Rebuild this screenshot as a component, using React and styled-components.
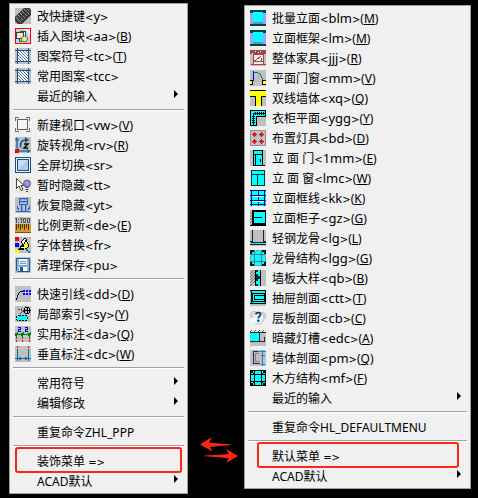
import React from "react";
import styled, { createGlobalStyle } from "styled-components";

const GlobalStyle = createGlobalStyle`
  * {
    box-sizing: border-box;
  }
  body {
    margin: 0;
    background-color: #000;
    font-family: "Noto Sans", "Noto Sans CJK SC", sans-serif;
    font-size: 12px;
    line-height: 20px;
    color: #000;
  }
`;

const Page = styled.main`
  display: flex;
  align-items: flex-start;
  padding: 3px 7px 3px 9px;
`;
const Column = styled.div`
  flex: ${(props) => props.$grow} 1 0;
  min-width: 0;
  padding-top: ${(props) => (props.$lower ? "2px" : "0px")};
`;
const MenuBox = styled.div`
  display: flex;
  flex-direction: column;
  padding: 2px;
  background-color: #f0f0f0;
  border: 1px solid #a0a0a0;
`;
const Item = styled.button`
  position: relative;
  display: flex;
  align-items: center;
  gap: 6px;
  width: 100%;
  height: 20px;
  padding: 0 7px 0 3px;
  border: none;
  background: none;
  color: inherit;
  font: inherit;
  text-align: left;
  white-space: pre;
  cursor: pointer;
`;
const IconSlot = styled.span`
  display: flex;
  flex: none;
  width: 16px;
  height: 16px;
`;
const Label = styled.span`
  flex: 1;
  height: 20px;
  line-height: 22px;
`;
const Code = styled.span`
  font-size: 13px;
  line-height: 1;
`;
const Bracket = styled.span`
  font-family: "DejaVu Sans", sans-serif;
  font-size: 10px;
  line-height: 1;
`;
const Separator = styled.hr`
  height: 2px;
  width: auto;
  margin: 3px 1px 4px;
  border: none;
  border-top: 1px solid #a0a0a0;
  background-color: #fff;
`;
const Frame = styled.span`
  position: absolute;
  top: -4px;
  bottom: -2px;
  left: ${(props) => (props.$narrow ? "10px" : "3px")};
  right: ${(props) => (props.$narrow ? "9px" : "3px")};
  border: 2px solid #ff2414;
  border-radius: 3px;
  pointer-events: none;
`;
const Arrow = styled.svg`
  flex: none;
  margin-bottom: 4px;
`;
const Swap = styled.div`
  display: flex;
  flex: 56 1 0;
  justify-content: center;
  align-self: flex-end;
  padding-bottom: 31px;
`;

const GRAY = "#c0c0c0";
const CYAN = "#00ffff";
const BLUE = "#0868b0";

const Svg = ({ bg, smooth, children }) => (
  <svg
    width="16"
    height="16"
    viewBox="0 0 16 16"
    fill="none"
    shapeRendering={smooth ? "auto" : "crispEdges"}
    aria-hidden="true"
  >
    {bg ? <rect width="16" height="16" fill={bg} /> : null}
    {children}
  </svg>
);

const hatchIcon = (
  <Svg bg={GRAY} smooth>
    <path d="M0 9L9 0h5l2 2v5l-9 9H3l-3-3z" fill="#383838" />
    <path d="M1 9l5 5M3 7l5 5M5 5l5 5M7 3l5 5M9 1l5 5" stroke="#d8d8d8" strokeDasharray="1 1" />
    <path d="M12 1l3 3M2 11l3 3" stroke="#b0b0b0" strokeDasharray="1 1" />
  </Svg>
);
const insertBlock = (
  <Svg bg="#c9d3dc" smooth>
    <path d="M9 1h6v6z" fill="#eef2f5" />
    <rect x="5.500" y="3.500" width="5" height="5" fill="#fff" stroke="#17457c" />
    <rect x="1.500" y="4.500" width="7" height="6" fill="#fff3a0" stroke="#17457c" />
    <path d="M4.500 11v2.500H7" stroke="#17457c" />
    <circle cx="9.500" cy="11" r="3" fill="#f7e98a" stroke="#4a6a6a" />
    <rect x=".5" y=".5" width="15" height="15" stroke="#ff0000" />
  </Svg>
);
const patternIcon = (
  <Svg bg={GRAY} smooth>
    <rect x="3" y="3" width="10" height="10" fill="#fff" />
    <path d="M3 10l3 3M3 7l6 6M3 4l9 9M5 3l8 8M8 3l5 5M11 3l2 2" stroke="#3c6c9c" strokeWidth=".9" />
    <path d="M0 2.500h16M0 13.500h16M2.500 0v16M13.500 0v16" stroke="#1c4f88" />
  </Svg>
);
const viewport = (
  <Svg>
    <rect x="2.500" y="2.500" width="10" height="10" fill="#f6f6f6" stroke="#606060" />
    <path d="M.5 4V.5H4M11 .5h3.500V4M.5 11v3.500H4M11 14.500h3.500V11" stroke="#707070" />
  </Svg>
);
const rotateView = (
  <Svg bg={GRAY} smooth>
    <path d="M2 1v12M4 14h11" stroke="#1674b8" strokeWidth="1.500" />
    <path d="M2 0l2.500 3.500h-5zM16 14l-4-2v4z" fill="#1674b8" />
    <path d="M5.500 10.500C5 5 7 3 11 3" stroke="#174a80" strokeWidth="1.500" />
    <path d="M10 0l4 3-4 3z" fill="#174a80" />
    <path d="M9 7h4l-4 4h4" stroke="#000" strokeWidth="1.400" />
    <path d="M0 12h4v4H0z" fill="#ff0000" />
    <path d="M0 15h1v1H0zM3 12h1v1H3z" fill="#600" />
  </Svg>
);
const fullScreen = (
  <Svg bg="#1c4f80">
    <rect x="1" y="1" width="14" height="14" fill="#eef6fc" />
    <rect x="2" y="2" width="12" height="12" fill="#1c4f80" />
    <rect x="3" y="3" width="10" height="10" fill="#a9cdec" />
    <path d="M3 3h9L3 12z" fill="#c4def4" />
  </Svg>
);
const hideIcon = (
  <Svg bg="#ece9d8" smooth>
    <path d="M1.500 1.500v10L4 9l2 4.500 2-1L6 8.500h3z" fill="#fff" stroke="#404040" />
    <circle cx="12" cy="6.500" r="3.500" fill="#8c8cd8" stroke="#5c5ca8" />
    <path d="M11 5l2 3" stroke="#c8c8ff" />
    <path d="M10.500 10.500h3M10.500 12.500h3M11 14.500h2" stroke="#404060" />
  </Svg>
);
const showIcon = (
  <Svg bg={GRAY}>
    <path d="M4.500 1.500h8v6h-8zM4.500 4.500h8" stroke="#2060d0" />
    <path d="M6.500 8v6M10.500 8v6M2.500 9v2h1v2M14.500 9v2h-1v2M1 14.500h14" stroke="#2060d0" />
    <path d="M7.500 8v6M11.500 8v6M5 2.500h7M5 5.500h7" stroke="#86a6dc" />
  </Svg>
);
const scaleIcon = (
  <Svg bg={GRAY} smooth>
    <rect y="7" width="16" height="8" fill="#d39a2c" />
    <path d="M0 15.500h16" stroke="#805010" />
    <path d="M1.500 7v6M3.500 7v4M5.500 7v6M7.500 7v4M9.500 7v6M11.500 7v4M13.500 7v6" stroke="#4c3000" />
    <path d="M0 2l1.500-1v5M3.500 2v1M3.500 5v1M5 2l1.500-1v5M8.500 1.500h2v4h-2zM12.500 1.500h2v4h-2z" stroke="#505050" />
  </Svg>
);
const fontSwap = (
  <Svg bg={GRAY}>
    <path d="M0 0h4v4H0z" fill="#ff0000" />
    <path d="M0 6h4v4H0z" fill="#0000ff" />
    <path d="M0 12h4v4H0z" fill="#ffff00" />
    <path d="M4 13l5-7" stroke="#000" strokeWidth="2" />
    <path d="M6 5l4-4 2 2-3 5z" fill="#f4f4f4" stroke="#000" />
    <path d="M4 11h5v2H4z" fill="#000" />
    <path d="M11 3l3 6-3 3-3-3z" fill="#ffff00" stroke="#000" />
    <path d="M6 10h5" stroke="#fff" />
    <path d="M11 12h2v2h2v2h-2v-2h-2z" fill="#008080" />
  </Svg>
);
const saveIcon = (
  <Svg bg={GRAY} smooth>
    <path d="M1.500 1.500h13v13h-12l-1-1z" fill="#8cb8e0" stroke="#1c5a94" />
    <path d="M4 2h8v6H4z" fill="#f4f8fc" />
    <path d="M4 8.500h8M5 4.500h6M5 6.500h6" stroke="#6c94bc" />
    <path d="M4 10h8v4H4z" fill="#fff" />
    <path d="M5 10h3v4H5z" fill="#1c5a94" />
  </Svg>
);
const leader = (
  <Svg bg={GRAY}>
    <path d="M1 12h1v2H1zM2 9h1v3H2zM3 7h1v2H3zM4 6h1v1H4zM5 5h3v1H5z" fill="#000" />
    <path d="M8 4h2v2H8zM11 4h2v2h-2zM14 4h2v2h-2zM8 7h2v2H8zM11 7h2v2h-2zM14 7h2v2h-2z" fill="#0000ff" />
  </Svg>
);
const localIndex = (
  <Svg bg={GRAY}>
    <rect x="1.500" y="9.500" width="11" height="5" rx="2" fill={CYAN} stroke="#000" strokeDasharray="2 1" />
    <path d="M5 8l3-3h2M3 3h2M6 2v3" stroke="#206080" />
    <circle cx="12" cy="4.500" r="3" stroke="#000" />
    <path d="M8 4.500h8M12.500 1v7" stroke="#000" />
  </Svg>
);
const practicalDim = (
  <Svg bg={GRAY}>
    <path d="M3 1.500h2.500v2h-2v2H6M10 1.500h2.500v2h-2v2H13" stroke="#0000ff" />
    <path d="M0 8.500h16M1.500 7v5M7.500 7v5M14.500 7v5" stroke="#008000" />
    <path d="M0 9l3-2M6 9l3-2M13 9l3-2" stroke="#008000" strokeWidth="2" />
    <path d="M1.500 12v1M1.500 14v2M7.500 12v1M7.500 14v2M14.500 12v1M14.500 14v2" stroke="#ff0000" />
  </Svg>
);
const verticalDim = (
  <Svg bg={GRAY} smooth>
    <path d="M2.500 3v12M13.500 3v12M0 12.500h16" stroke={BLUE} />
    <path d="M3 12.500l3-2v4zM13 12.500l-3-2v4z" fill={BLUE} />
    <path d="M2.500 0v2M13.500 0v2" stroke="#ff0000" />
  </Svg>
);
const elevation = (
  <Svg bg="#a0a0ff">
    <rect x="3" y="2" width="10" height="10" fill={CYAN} />
    <path d="M3 12h10v2H3z" fill="#6890b0" />
    <path d="M0 0h16v2H0zM0 14h16v2H0z" fill="#004848" />
    <path d="M0 2h3v1H0zM13 2h3v1h-3z" fill="#004848" />
  </Svg>
);
const furniture = (
  <Svg bg={GRAY}>
    <path d="M0 0h16v4H0z" fill="#a04848" />
    <path d="M5 1h1v1H5zM10 1h1v1h-1zM2 3h1v1H2zM8 2h1v1H8z" fill="#fff" />
    <rect x="3.500" y="4.500" width="10" height="10" fill="#f4efe4" stroke="#a04848" />
    <path d="M4 10h2l5-4M4 11.500h9M11 8v3" stroke="#a04848" />
    <path d="M1 14h15v1H1z" fill="#a04848" />
  </Svg>
);
const doorPlan = (
  <Svg bg={GRAY}>
    <path d="M3.500 1v10" stroke="#0000ff" />
    <path d="M4 2h4v1H4zM8 3h2v1H8zM10 4h1v2h-1zM11 6h1v2h-1zM12 8h1v2h-1z" fill="#008080" />
    <path d="M-.5 10.500h3v4h-3zM12.500 10.500h4v4h-4z" fill="#ffff00" stroke="#000" />
  </Svg>
);
const wallIcon = (
  <Svg bg={GRAY}>
    <path d="M0 1h16v5h-5v10H6V6H0z" fill="#ffff00" />
    <path d="M0 .5h16M0 6.500h5.500V16M16 6.500h-4.500V16" stroke="#000" />
  </Svg>
);
const wardrobePlan = (
  <Svg bg={GRAY}>
    <path d="M.5.5h15v6h-9v9h-6z" fill={CYAN} stroke="#000" />
    <path d="M3.500 15V3.500H16" stroke="#000" />
    <path d="M5.500 2v3M7.500 2v3M9.500 2v3M11.500 2v3M13.500 2v3M2 6.500h3M2 8.500h3M2 10.500h3M2 12.500h3" stroke="#000" />
  </Svg>
);
const lights = (
  <Svg bg={GRAY}>
    <rect x=".5" y=".5" width="15" height="15" stroke="#909090" />
    <path d="M2 4.500h5M9 4.500h5M2 11.500h5M9 11.500h5M4.500 2v5M11.500 2v5M4.500 9v5M11.500 9v5" stroke="#902020" />
    <path d="M3 3h3v3H3zM10 3h3v3h-3zM3 10h3v3H3zM10 10h3v3h-3z" fill="#f01010" />
  </Svg>
);
const doorElevation = (
  <Svg bg={GRAY}>
    <path d="M3.500.5h9v15h-9z" fill={CYAN} stroke="#000" />
    <path d="M4 4.500h8M5.500 5v10M10.500 9v3M2.500 15.500h12" stroke="#000" />
    <path d="M6 5h3v10H6z" fill={CYAN} />
  </Svg>
);
const windowElevation = (
  <Svg bg="#e0e0e0">
    <rect x="1" y="0" width="14" height="16" fill={CYAN} />
    <path d="M1 .5h14M1.500 0v16M14.500 0v16M1 15.500h14M2 4.500h12M7.500 5v10" stroke="#003838" />
  </Svg>
);
const frameLines = (
  <Svg bg={CYAN}>
    <path d="M0 .5h16M0 5.500h16M0 10.500h16M0 14.500h16M1.500 0v16M14.500 0v16M8.500 0v16" stroke="#000080" />
    <path d="M2 6.500h12M2 11.500h12" stroke="#c8ffff" />
  </Svg>
);
const cabinet = (
  <Svg bg={GRAY}>
    <path d="M0 4l3-3M0 7l3-3M0 10l3-3M0 13l3-3M0 16l3-3" stroke="#707070" />
    <path d="M3.500.5h12v14h-12z" fill={CYAN} stroke="#000" />
    <path d="M4 1.500h11M3 7.500h9M3 13.500h12M0 15.500h16M2.500 0v16" stroke="#000" />
  </Svg>
);
const lightKeel = (
  <Svg bg={GRAY}>
    <path d="M2.500 0v12M13.500 0v12M1 12.500h15" stroke="#202020" />
    <path d="M0 13h16v1H0z" fill={CYAN} />
    <path d="M0 11h3v1H0zM13 11h3v1h-3zM0 14h16v1H0z" fill="#202020" />
  </Svg>
);
const keelStructure = (
  <Svg bg={CYAN}>
    <path d="M4.500 0v16M11.500 0v16M0 4.500h16M0 11.500h16" stroke="#507888" />
    <path d="M0 0h4v2H2v2H0zM12 0h4v4h-2V2h-2zM0 12h2v2h2v2H0zM14 12h2v4h-4v-2h2z" fill="#101818" />
    <path d="M6 0h4v1H6zM6 15h4v1H6zM0 6h1v4H0zM15 6h1v4h-1z" fill="#70a0a0" />
  </Svg>
);
const wallPanel = (
  <Svg bg={GRAY}>
    <path d="M0 4l4-4M0 7l5-5M0 10l5-5M0 13l5-5M0 16l5-5" stroke="#707070" />
    <path d="M5.500 0v16M10.500 0v16" stroke="#000" />
    <path d="M6 0h4v16H6z" fill={CYAN} />
    <path d="M6 0h2v2H6zM6 4h2v7H6zM6 14h2v2H6zM8 6h2v3H8z" fill="#102838" />
  </Svg>
);
const drawerSection = (
  <Svg bg={GRAY}>
    <path d="M0 0h16v3H0zM0 11h16v3H0z" fill={CYAN} />
    <path d="M2.500 3.500h12v8h-12zM4.500 5.500h10v4h-10z" fill={CYAN} stroke="#000" />
    <path d="M0 .5h16M0 13.500h16M1.500 0v13M15.500 0v14" stroke="#000" />
    <path d="M5 9.500h10" stroke="#000" />
  </Svg>
);
const helpCloud = (
  <Svg smooth>
    <circle cx="4" cy="5" r="3.500" fill="#e4eaf0" stroke="#b0b8c0" />
    <circle cx="12" cy="6" r="3.500" fill="#e4eaf0" stroke="#b0b8c0" />
    <circle cx="8" cy="8" r="6" fill="#edf2f7" stroke="#b8c0c8" />
    <circle cx="4" cy="10.500" r="3" fill="#f4f7fa" />
    <path d="M6 4.500c0-2.500 4.500-2.500 4.500 0 0 1.500-2.200 1.700-2.200 3.800" stroke="#143c68" strokeWidth="1.800" />
    <circle cx="8.300" cy="10.800" r="1.200" fill="#143c68" />
  </Svg>
);
const lightTrough = (
  <Svg bg={GRAY}>
    <path d="M0 0h16v2H0z" fill="#e8e8e8" />
    <path d="M0 2l2-2M4 2l2-2M8 2l2-2M12 2l2-2" stroke="#606060" />
    <path d="M0 3h10v8H0z" fill={CYAN} />
    <path d="M0 2.500h16M9.500 3v8h5V7M0 11.500h9" stroke="#103030" />
  </Svg>
);
const wallSection = (
  <Svg bg={GRAY}>
    <path d="M10 1.500H3.500v12H10" stroke="#202080" />
    <path d="M5.500 3v9M5 3.500h4M5 11.500h4" stroke="#808080" />
    <path d="M8 1.500h8M12.500 0v16M11 5.500h4M11 14.500h4" stroke="#1880e0" />
  </Svg>
);
const timberStructure = (
  <Svg bg={CYAN}>
    <path d="M4.500 0v16M11.500 0v16M0 4.500h16M0 11.500h16M.5.5h15v15H.5z" stroke="#000" />
    <path d="M0 0l4 4M4 0L0 4M12 0l4 4M16 0l-4 4M0 12l4 4M4 12l-4 4M12 12l4 4M16 12l-4 4" stroke="#000" />
  </Svg>
);

const SubmenuArrow = () => (
  <Arrow width="4" height="8" viewBox="0 0 4 8" aria-hidden="true">
    <path d="M0 0l4 4-4 4z" fill="#000" />
  </Arrow>
);

const SwapArrows = () => (
  <svg width="44" height="26" viewBox="-6 0 44 26" fill="#ff2414" aria-hidden="true">
    <path d="M0 7.500L12 0 9 5.500l10 1 11 .7c.6.300.6.900 0 1l-11 .8-9 1 2.500 4.500z" />
    <path d="M38 19L26 12l3 5-10 .8-14 .7c-1 .2-1 .7 0 .8l14 1 10 1-3 4.700z" />
  </svg>
);

const LEFT_MENU = [
  [
    { text: "改快捷键", code: "y", icon: hatchIcon },
    { text: "插入图块", code: "aa", hotkey: "B", icon: insertBlock },
    { text: "图案符号", code: "tc", hotkey: "T", icon: patternIcon },
    { text: "常用图案", code: "tcc", icon: patternIcon },
    { text: "最近的输入", submenu: true },
  ],
  [
    { text: "新建视口", code: "vw", hotkey: "V", icon: viewport },
    { text: "旋转视角", code: "rv", hotkey: "R", icon: rotateView },
    { text: "全屏切换", code: "sr", icon: fullScreen },
    { text: "暂时隐藏", code: "tt", icon: hideIcon },
    { text: "恢复隐藏", code: "yt", icon: showIcon },
    { text: "比例更新", code: "de", hotkey: "E", icon: scaleIcon },
    { text: "字体替换", code: "fr", icon: fontSwap },
    { text: "清理保存", code: "pu", icon: saveIcon },
  ],
  [
    { text: "快速引线", code: "dd", hotkey: "D", icon: leader },
    { text: "局部索引", code: "sy", hotkey: "Y", icon: localIndex },
    { text: "实用标注", code: "da", hotkey: "Q", icon: practicalDim },
    { text: "垂直标注", code: "dc", hotkey: "W", icon: verticalDim },
  ],
  [
    { text: "常用符号", submenu: true },
    { text: "编辑修改", submenu: true },
  ],
  [{ text: "重复命令ZHL_PPP" }],
  [
    { text: "装饰菜单 ", framed: true },
    { text: "ACAD默认", submenu: true },
  ],
];

const RIGHT_MENU = [
  [
    { text: "批量立面", code: "blm", hotkey: "M", icon: elevation },
    { text: "立面框架", code: "lm", hotkey: "M", icon: elevation },
    { text: "整体家具", code: "jjj", hotkey: "R", icon: furniture },
    { text: "平面门窗", code: "mm", hotkey: "V", icon: doorPlan },
    { text: "双线墙体", code: "xq", hotkey: "Q", icon: wallIcon },
    { text: "衣柜平面", code: "ygg", hotkey: "Y", icon: wardrobePlan },
    { text: "布置灯具", code: "bd", hotkey: "D", icon: lights },
    { text: "立 面 门", code: "1mm", hotkey: "E", icon: doorElevation },
    { text: "立 面 窗", code: "lmc", hotkey: "W", icon: windowElevation },
    { text: "立面框线", code: "kk", hotkey: "K", icon: frameLines },
    { text: "立面柜子", code: "gz", hotkey: "G", icon: cabinet },
    { text: "轻钢龙骨", code: "lg", hotkey: "L", icon: lightKeel },
    { text: "龙骨结构", code: "lgg", hotkey: "G", icon: keelStructure },
    { text: "墙板大样", code: "qb", hotkey: "B", icon: wallPanel },
    { text: "抽屉剖面", code: "ctt", hotkey: "T", icon: drawerSection },
    { text: "层板剖面", code: "cb", hotkey: "C", icon: helpCloud },
    { text: "暗藏灯槽", code: "edc", hotkey: "A", icon: lightTrough },
    { text: "墙体剖面", code: "pm", hotkey: "Q", icon: wallSection },
    { text: "木方结构", code: "mf", hotkey: "F", icon: timberStructure },
    { text: "最近的输入", submenu: true },
  ],
  [{ text: "重复命令HL_DEFAULTMENU" }],
  [
    { text: "默认菜单 ", framed: true },
    { text: "ACAD默认", submenu: true },
  ],
];

function MenuItem({ item, narrowFrame }) {
  return (
    <Item type="button" role="menuitem" aria-haspopup={item.submenu ? "menu" : undefined}>
      <IconSlot>{item.icon}</IconSlot>
      <Label>
        {item.text}
        {item.code ? (
          <Code>
            <Bracket>&lt;</Bracket>
            {item.code}
            <Bracket>&gt;</Bracket>
          </Code>
        ) : null}
        {item.hotkey ? <>(<u>{item.hotkey}</u>)</> : null}
        {item.framed ? <Bracket>=&gt;</Bracket> : null}
      </Label>
      {item.submenu ? <SubmenuArrow /> : null}
      {item.framed ? <Frame $narrow={narrowFrame} /> : null}
    </Item>
  );
}

function ContextMenu({ groups, narrowFrame }) {
  return (
    <MenuBox role="menu">
      {groups.map((group, index) => (
        <React.Fragment key={index}>
          {index > 0 ? <Separator /> : null}
          {group.map((item) => (
            <MenuItem key={item.text + item.code} item={item} narrowFrame={narrowFrame} />
          ))}
        </React.Fragment>
      ))}
    </MenuBox>
  );
}

function App() {
  return (
    <>
      <GlobalStyle />
      <Page>
        <Column $grow={179}>
          <ContextMenu groups={LEFT_MENU} />
        </Column>
        <Swap>
          <SwapArrows />
        </Swap>
        <Column $grow={227} $lower>
          <ContextMenu groups={RIGHT_MENU} narrowFrame />
        </Column>
      </Page>
    </>
  );
}

export default App;
